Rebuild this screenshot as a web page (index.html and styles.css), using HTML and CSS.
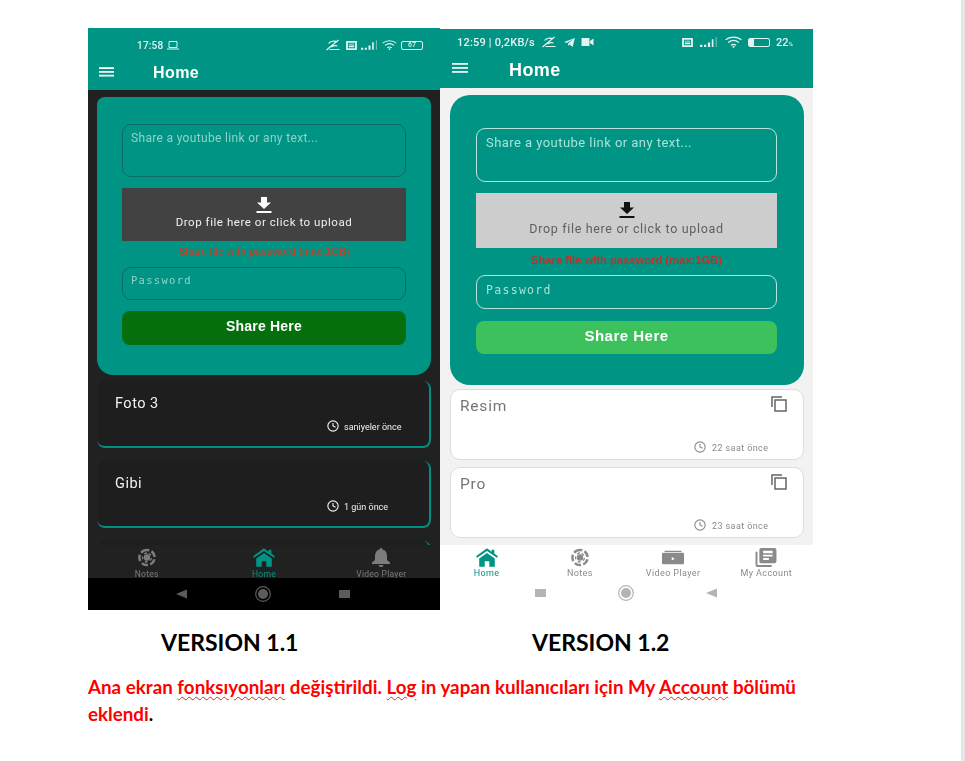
FILE: index.html
```html
<!DOCTYPE html>
<html lang="tr">

<head>
	<meta charset="UTF-8">
	<meta name="viewport" content="width=device-width, initial-scale=1.0">
	<title>Version 1.1 / Version 1.2</title>
	<link rel="stylesheet" href="styles.css">
</head>

<body>
	<svg class="defs" width="0" height="0" aria-hidden="true">
		<symbol id="i-menu" viewBox="0 0 16 10"><path d="M0 0h16v1.8H0zM0 4h16v1.8H0zM0 8h16v1.8H0z"/></symbol>
		<symbol id="i-download" viewBox="0 0 16 16"><path d="M5 0h6v5.500h4L8 12 1 5.500h4zM.5 14h15v2H.5z"/></symbol>
		<symbol id="i-clock" viewBox="0 0 14 14"><path fill="none" stroke="currentColor" stroke-width="1.300" d="M7 1a6 6 0 1 0 0 12A6 6 0 0 0 7 1zM7 3.500V7l3 1.500"/></symbol>
		<symbol id="i-copy" viewBox="0 0 16 16"><path fill="none" stroke="currentColor" stroke-width="1.500" d="M1 11V1h10M4 4h11v11H4z"/></symbol>
		<symbol id="i-home" viewBox="0 0 24 20"><path d="M12 0l5 3.600V1.500h3v4.200l4 3-1.200 1.600L12 3 1.200 10.300 0 8.700zM3.500 11L12 5l8.500 6v9h-6v-6h-5v6h-6z"/></symbol>
		<symbol id="i-aperture" viewBox="0 0 20 20"><circle cx="10" cy="10" r="3.400"/><path fill="none" stroke="currentColor" stroke-width="2.600" stroke-dasharray="7 2.500" d="M10 2a8 8 0 1 0 0 16 8 8 0 0 0 0-16z"/><path fill="none" stroke="currentColor" stroke-width="1.400" stroke-dasharray="3 3" d="M10 5.300a4.700 4.700 0 1 0 0 9.400 4.700 4.700 0 0 0 0-9.400z"/></symbol>
		<symbol id="i-bell" viewBox="0 0 18 19"><path d="M9 0a1.500 1.500 0 0 1 1.500 1.600C13.500 2.300 15 4.800 15 8v4l3 2.500V16H0v-1.500L3 12V8c0-3.200 1.500-5.700 4.500-6.400A1.500 1.500 0 0 1 9 0zM6.500 17h5a2.500 2 0 0 1-5 0z"/></symbol>
		<symbol id="i-video" viewBox="0 0 26 16"><path d="M3 0h20v1.500H3zM1.500 2.500h23a1.500 1.500 0 0 1 1.500 1.500v10.500a1.500 1.500 0 0 1-1.500 1.500h-23A1.500 1.500 0 0 1 0 14.500V4a1.500 1.500 0 0 1 1.500-1.500zM11.500 7.500v4l3.500-2z" fill-rule="evenodd"/></symbol>
		<symbol id="i-news" viewBox="0 0 22 20"><path fill-rule="evenodd" d="M6 0h14a2 2 0 0 1 2 2v12a2 2 0 0 1-2 2H6a2 2 0 0 1-2-2V2a2 2 0 0 1 2-2zM8 3v2.500h10V3zM8 7v2h10V7zM8 10.500v2h6v-2zM0 4h2v14h15v2H2a2 2 0 0 1-2-2z"/></symbol>
		<symbol id="i-mute" viewBox="0 0 16 12"><path fill="none" stroke="currentColor" stroke-width="1.200" d="M1 11L13 1M3 4.500C5 2 9 1.500 11.500 3M4 10.500h10M6 8c2-1.500 4-1.500 6-1"/></symbol>
		<symbol id="i-send" viewBox="0 0 12 10"><path d="M12 0L9.500 10 6 7.200 4.500 9V6.200L10 1.500 3 5.500 0 4.500z"/></symbol>
		<symbol id="i-cam" viewBox="0 0 12 8"><path d="M0 0h8v8H0zM8.500 3L12 .5v7L8.500 5z"/></symbol>
		<symbol id="i-sim" viewBox="0 0 12 10"><path fill-rule="evenodd" d="M0 0h12v10H0zM2 2v6h8V2z"/><path d="M3 3h6v1H3zM3 5h6v2H3z"/></symbol>
		<symbol id="i-signal" viewBox="0 0 16 9"><path d="M0 7h2v2H0zM3.500 7h2v2h-2zM7 5h2v4H7zM10.500 2h1.500v7h-1.500z"/><path d="M14 0h1v9h-1z" opacity=".5"/></symbol>
		<symbol id="i-wifi" viewBox="0 0 16 11"><path fill="none" stroke="currentColor" stroke-width="1.200" d="M.5 3.500c4-3.500 11-3.500 15 0M3 6c3-2.500 7-2.500 10 0M5.500 8.500c1.500-1 3.500-1 5 0"/><circle cx="8" cy="10" r="1"/></symbol>
		<symbol id="i-back" viewBox="0 0 12 10"><path d="M12 0v10L0 5z"/></symbol>
		<symbol id="i-round" viewBox="0 0 16 16"><circle cx="8" cy="8" r="5"/><circle cx="8" cy="8" r="7.300" fill="none" stroke="currentColor" stroke-width="1.200"/></symbol>
	</svg>

	<main class="sheet">
		<div class="shots">
			<figure class="shot old">
				<div class="phone">
					<header class="topbar">
						<div class="status">
							<span class="clock">17:58</span>
							<svg class="st laptop" viewBox="0 0 12 9"><path fill="none" stroke="currentColor" d="M2 .5h8v6H2zM0 8h12"/></svg>
							<span class="spacer"></span>
							<svg class="st mute"><use href="#i-mute"/></svg>
							<svg class="st sim"><use href="#i-sim"/></svg>
							<svg class="st signal"><use href="#i-signal"/></svg>
							<svg class="st wifi"><use href="#i-wifi"/></svg>
							<span class="batt">67</span>
						</div>
						<div class="appbar">
							<svg class="menu"><use href="#i-menu"/></svg>
							<span class="title">Home</span>
						</div>
					</header>
					<div class="content">
						<section class="panel">
							<div class="field area">Share a youtube link or any text...</div>
							<div class="upload">
								<svg class="dl"><use href="#i-download"/></svg>
								<span>Drop file here or click to upload</span>
							</div>
							<p class="hint">Share file with password (max:1GB)</p>
							<div class="field pass">Password</div>
							<div class="share">Share Here</div>
						</section>
						<article class="card">
							<h3>Foto 3</h3>
							<div class="when"><svg class="ck"><use href="#i-clock"/></svg>saniyeler önce</div>
						</article>
						<article class="card">
							<h3>Gibi</h3>
							<div class="when"><svg class="ck"><use href="#i-clock"/></svg>1 gün önce</div>
						</article>
						<article class="card"></article>
					</div>
					<nav class="tabs">
						<div class="tab"><svg><use href="#i-aperture"/></svg>Notes</div>
						<div class="tab on"><svg><use href="#i-home"/></svg>Home</div>
						<div class="tab"><svg><use href="#i-bell"/></svg>Video Player</div>
					</nav>
					<div class="sysbar">
						<svg class="back"><use href="#i-back"/></svg>
						<svg class="round"><use href="#i-round"/></svg>
						<span class="square"></span>
					</div>
				</div>
				<figcaption>VERSION 1.1</figcaption>
			</figure>

			<figure class="shot new">
				<div class="phone">
					<header class="topbar">
						<div class="status">
							<span class="clock">12:59 | 0,2KB/s</span>
							<svg class="st mute"><use href="#i-mute"/></svg>
							<svg class="st send"><use href="#i-send"/></svg>
							<svg class="st cam"><use href="#i-cam"/></svg>
							<span class="spacer"></span>
							<svg class="st sim"><use href="#i-sim"/></svg>
							<svg class="st signal"><use href="#i-signal"/></svg>
							<svg class="st wifi"><use href="#i-wifi"/></svg>
							<span class="batt low"></span>
							<span class="pct">22<small>%</small></span>
						</div>
						<div class="appbar">
							<svg class="menu"><use href="#i-menu"/></svg>
							<span class="title">Home</span>
						</div>
					</header>
					<div class="content">
						<section class="panel">
							<div class="field area">Share a youtube link or any text...</div>
							<div class="upload">
								<svg class="dl"><use href="#i-download"/></svg>
								<span>Drop file here or click to upload</span>
							</div>
							<p class="hint">Share file with password (max:1GB)</p>
							<div class="field pass">Password</div>
							<div class="share">Share Here</div>
						</section>
						<article class="card">
							<h3>Resim</h3>
							<svg class="cp"><use href="#i-copy"/></svg>
							<div class="when"><svg class="ck"><use href="#i-clock"/></svg>22 saat önce</div>
						</article>
						<article class="card">
							<h3>Pro</h3>
							<svg class="cp"><use href="#i-copy"/></svg>
							<div class="when"><svg class="ck"><use href="#i-clock"/></svg>23 saat önce</div>
						</article>
					</div>
					<nav class="tabs">
						<div class="tab on"><svg><use href="#i-home"/></svg>Home</div>
						<div class="tab"><svg><use href="#i-aperture"/></svg>Notes</div>
						<div class="tab"><svg><use href="#i-video"/></svg>Video Player</div>
						<div class="tab"><svg><use href="#i-news"/></svg>My Account</div>
					</nav>
					<div class="sysbar">
						<span class="square"></span>
						<svg class="round"><use href="#i-round"/></svg>
						<svg class="back"><use href="#i-back"/></svg>
					</div>
				</div>
				<figcaption>VERSION 1.2</figcaption>
			</figure>
		</div>

		<p class="note">Ana ekran <span class="typo">fonksıyonları</span> değiştirildi. <span class="typo">Log</span> in yapan kullanıcıları için My <span class="typo">Account</span> bölümü eklendi<span class="dot">.</span></p>
	</main>
</body>

</html>
```

FILE: styles.css
```css
* {
	box-sizing: border-box;
}

body {
	margin: 0;
	background: #fff;
	font-family: Roboto, "Liberation Sans", sans-serif;
}

.defs {
	display: block;
	height: 0;
}

.sheet {
	width: 965px;
	height: 761px;
	padding: 28px 0 0 88px;
	border-right: 4px solid #e6e6e6;
	overflow: hidden;
}

.shots {
	display: flex;
}

.shot {
	margin: 0;
}

/* the phones are pasted, upscaled screenshots: a little soft */
.phone {
	display: flex;
	flex-direction: column;
	height: 582px;
	overflow: hidden;
	filter: blur(.35px);
}

/* old = dark theme, new = light theme */
.old .phone {
	width: 352px;
	background: #212121;
}

.new {
	padding-top: 1px;
}

.new .phone {
	width: 373px;
	height: 581px;
	background: #f2f2f2;
}

.topbar {
	background: #009485;
	color: #fff;
	flex: none;
}

.old .topbar {
	height: 62px;
}

.new .topbar {
	height: 59px;
}

.status {
	display: flex;
	align-items: center;
	color: #e3f3f1;
	font-size: 10px;
	font-weight: 500;
}

.old .status {
	height: 34px;
	padding: 0 17px 0 49px;
	gap: 4px;
}

.new .status {
	height: 26px;
	padding: 0 20px 0 17px;
	gap: 6px;
}

.clock {
	letter-spacing: .2px;
}

.new .clock {
	font-size: 11px;
}

.spacer {
	flex: 1;
}

.st {
	width: 14px;
	height: 10px;
	fill: currentColor;
}

.st.mute {
	width: 17px;
	height: 12px;
}

.st.signal {
	width: 17px;
}

.new .st.signal {
	width: 20px;
}

.st.wifi {
	width: 15px;
}

.new .st.wifi {
	width: 17px;
	height: 12px;
}

.st.laptop {
	width: 12px;
	height: 9px;
}

.st.sim {
	width: 11px;
	height: 9px;
}

.st.send {
	width: 11px;
	height: 9px;
}

.st.cam {
	width: 13px;
	height: 8px;
}

.batt {
	width: 22px;
	height: 9px;
	border: 1px solid currentColor;
	border-radius: 2px;
	font-size: 7px;
	line-height: 7px;
	text-align: center;
}

.batt.low {
	background: linear-gradient(90deg, #e3f3f1 25%, transparent 25%);
}

.pct {
	font-size: 11px;
}

.pct small {
	font-size: 6px;
}

.appbar {
	display: flex;
	align-items: center;
}

.old .appbar {
	height: 20px;
	padding-left: 11px;
}

.new .appbar {
	height: 30px;
	padding-left: 12px;
}

.menu {
	width: 15px;
	height: 10px;
	fill: #fff;
}

.new .menu {
	width: 16px;
	position: relative;
	top: -2px;
}

.title {
	font-family: "Liberation Sans", sans-serif;
	font-weight: 700;
	letter-spacing: .4px;
}

.old .title {
	margin-left: 39px;
	padding-top: 1px;
	font-size: 16px;
}

.new .title {
	margin-left: 41px;
	font-size: 18px;
}

.content {
	flex: 1;
	min-height: 0;
	overflow: hidden;
}

.old .content {
	padding: 7px 9px 0;
}

.new .content {
	padding: 7px 9px 0 10px;
}

.panel {
	display: flex;
	flex-direction: column;
	background: #009485;
}

.old .panel {
	height: 278px;
	padding: 27px 25px 0;
	border-radius: 8px 8px 16px 16px;
}

.new .panel {
	height: 290px;
	padding: 33px 27px 0 26px;
	border-radius: 20px;
}

.field {
	border-radius: 9px;
	padding: 6px 9px;
}

.old .field {
	padding-left: 8px;
	border: 1px solid #0d6b64;
	color: #8fd3ca;
}

.new .field {
	border: 1px solid #b9e3dd;
	color: #a9e0d8;
}

.old .area {
	height: 53px;
	font-size: 12px;
	letter-spacing: .33px;
}

.new .area {
	height: 54px;
	font-size: 13px;
	letter-spacing: .45px;
}

.upload {
	display: flex;
	flex-direction: column;
	align-items: center;
	margin-top: 11px;
}

.old .upload {
	height: 53px;
	padding-top: 9px;
	background: #424242;
	color: #f0f0f0;
	font-size: 11.500px;
	letter-spacing: .55px;
	gap: 2px;
}

.new .upload {
	height: 55px;
	padding-top: 9px;
	background: #cdcdcd;
	color: #5f5f5f;
	font-size: 12.500px;
	letter-spacing: .67px;
	gap: 3px;
}

.dl {
	width: 16px;
	height: 16px;
}

.old .dl {
	fill: #fff;
}

.new .dl {
	fill: #111;
}

.hint {
	margin: 0;
	text-align: center;
	font-family: "Liberation Sans", sans-serif;
	font-weight: 700;
}

.old .hint {
	height: 26px;
	padding-top: 5px;
	font-size: 10px;
	color: #a84a35;
}

.new .hint {
	height: 27px;
	padding-top: 6px;
	font-size: 11.200px;
	color: #b5352a;
}

.pass {
	font-family: "DejaVu Sans Mono", monospace;
}

.old .pass {
	height: 33px;
	font-size: 10.500px;
	letter-spacing: 1.300px;
}

.new .pass {
	height: 34px;
	padding-top: 7px;
	font-size: 11.500px;
	letter-spacing: 1.300px;
}

.share {
	display: flex;
	align-items: center;
	justify-content: center;
	margin-top: 11px;
	padding-bottom: 4px;
	border-radius: 8px;
	color: #fff;
	font-family: "Liberation Sans", sans-serif;
	font-weight: 700;
}

.old .share {
	height: 34px;
	background: #056f0d;
	font-size: 14px;
	letter-spacing: .2px;
}

.new .share {
	height: 33px;
	margin-top: 12px;
	background: #3cc15c;
	font-size: 15px;
	letter-spacing: .5px;
}

.card {
	position: relative;
}

.card h3 {
	margin: 0;
	font-weight: 400;
}

.old .card {
	height: 67px;
	margin-bottom: 13px;
	padding: 14px 18px;
	background: #1e1e1e;
	border-right: 2px solid #008f80;
	border-bottom: 2px solid #008f80;
	border-radius: 8px;
	color: #f2f2f2;
}

.old .panel + .card {
	margin-top: 6px;
}

.old .card h3 {
	font-size: 14.500px;
	letter-spacing: .5px;
}

.new .card {
	height: 71px;
	margin-bottom: 7px;
	padding: 7px 9px;
	background: #fff;
	border: 1px solid #ddd;
	border-radius: 10px;
	color: #757575;
}

.new .panel + .card {
	margin-top: 4px;
}

.new .card h3 {
	font-size: 15.500px;
	letter-spacing: .8px;
}

/* sits in the card corner */
.when {
	position: absolute;
	display: flex;
	align-items: center;
	gap: 5px;
}

.old .when {
	top: 41px;
	left: 230px;
	font-size: 9px;
}

.new .when {
	top: 53px;
	left: 243px;
	gap: 6px;
	color: #8a8a8a;
	font-size: 9px;
	letter-spacing: .4px;
}

.ck {
	width: 12px;
	height: 12px;
	margin-top: -2px;
}

.cp {
	position: absolute;
	top: 6px;
	right: 16px;
	width: 16px;
	height: 16px;
	color: #666;
}

.tabs {
	display: grid;
	flex: none;
	grid-auto-flow: column;
	grid-auto-columns: 1fr;
	text-align: center;
}

.old .tabs {
	height: 33px;
	background: #212121;
	color: #7c7c7c;
	font-size: 8.500px;
	letter-spacing: .25px;
}

.new .tabs {
	height: 35px;
	background: #fff;
	color: #8a8a8a;
	font-size: 9px;
	letter-spacing: .4px;
}

.tab {
	display: flex;
	flex-direction: column;
	align-items: center;
	padding-top: 3px;
	gap: 2px;
}

.new .tab {
	gap: 1px;
}

.tab svg {
	width: 22px;
	height: 19px;
	fill: currentColor;
}

.tab.on {
	color: #009485;
}

.sysbar {
	display: grid;
	flex: none;
	grid-template-columns: repeat(3, 1fr);
	align-items: center;
	justify-items: center;
}

.old .sysbar {
	height: 32px;
	background: #000;
	padding: 0 55px 0 53px;
	color: #5c5c5c;
}

.new .sysbar {
	height: 30px;
	background: #fff;
	padding: 0 59px 5px 58px;
	color: #b4b4b4;
}

.back {
	width: 11px;
	height: 10px;
	fill: currentColor;
}

.round {
	width: 16px;
	height: 16px;
	fill: currentColor;
}

.square {
	width: 11px;
	height: 8px;
	background: currentColor;
}

figcaption {
	margin-top: 18px;
	font: 700 23px/28px Lato, "Open Sans", sans-serif;
	color: #000;
}

.old figcaption {
	padding-left: 73px;
}

.new figcaption {
	padding-left: 92px;
}

.note {
	width: 720px;
	margin: 17px 0 0;
	font: 700 18.800px/27px Lato, "Open Sans", sans-serif;
	color: #f00;
}

.typo {
	text-decoration: underline wavy #c0392b 1px;
	text-underline-offset: 2px;
}

.dot {
	color: #000;
}
```
